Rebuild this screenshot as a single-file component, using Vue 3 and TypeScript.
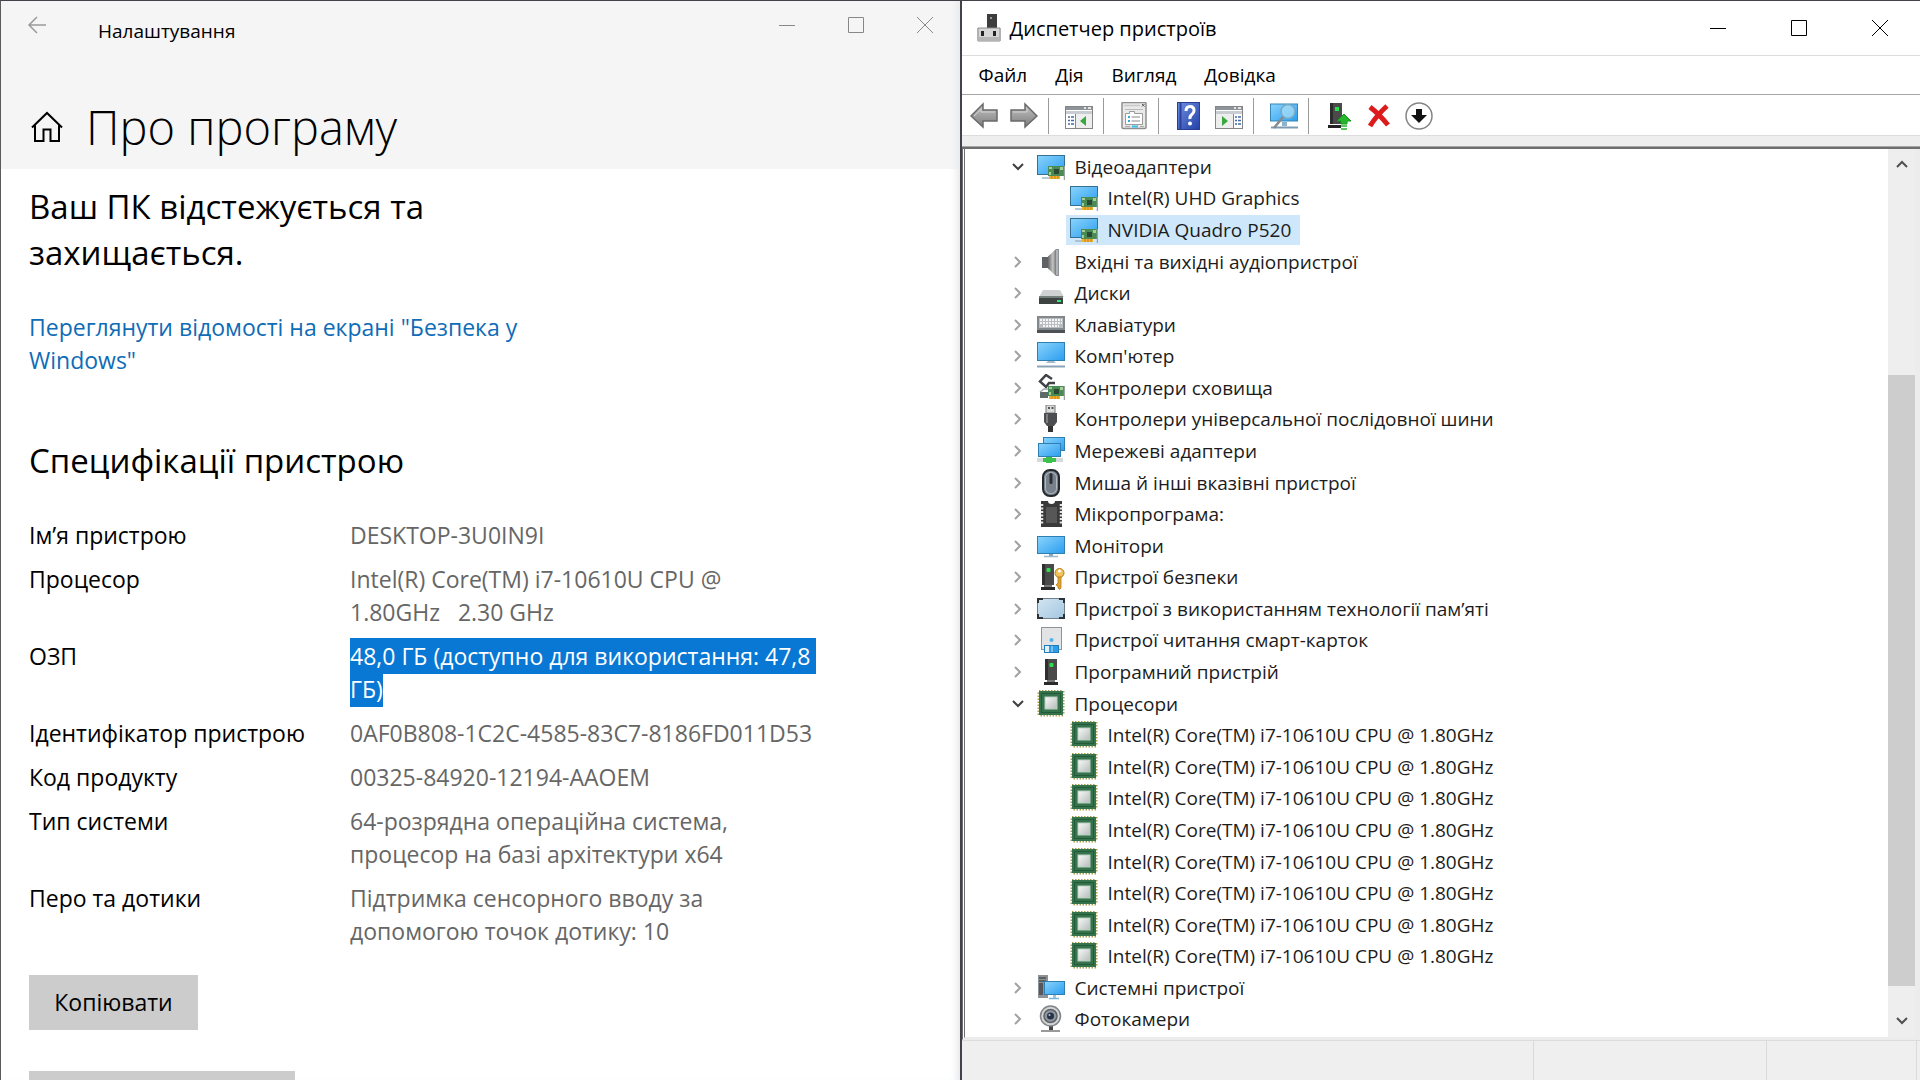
<script setup lang="ts">
interface Spec {
  label: string
  value: string
  selected?: boolean
}

interface Device {
  name: string
  icon: string
  open?: boolean
  child?: boolean
  selected?: boolean
}

interface Tool {
  icon: string
  label: string
  separated?: boolean
}

const specs: Spec[] = [
  { label: 'Ім’я пристрою', value: 'DESKTOP-3U0IN9I' },
  { label: 'Процесор', value: 'Intel(R) Core(TM) i7-10610U CPU @\n1.80GHz   2.30 GHz' },
  { label: 'ОЗП', value: '48,0 ГБ (доступно для використання: 47,8 \nГБ)', selected: true },
  { label: 'Ідентифікатор пристрою', value: '0AF0B808-1C2C-4585-83C7-8186FD011D53' },
  { label: 'Код продукту', value: '00325-84920-12194-AAOEM' },
  { label: 'Тип системи', value: '64-розрядна операційна система,\nпроцесор на базі архітектури x64' },
  { label: 'Перо та дотики', value: 'Підтримка сенсорного вводу за\nдопомогою точок дотику: 10' },
]

const menus: string[] = ['Файл', 'Дія', 'Вигляд', 'Довідка']

const tools: Tool[] = [
  { icon: 'back', label: 'Назад' },
  { icon: 'forward', label: 'Вперед' },
  { icon: 'tree-pane', label: 'Дерево консолі', separated: true },
  { icon: 'properties', label: 'Властивості', separated: true },
  { icon: 'help', label: 'Довідка', separated: true },
  { icon: 'action-pane', label: 'Область дій' },
  { icon: 'scan', label: 'Оновити конфігурацію', separated: true },
  { icon: 'update', label: 'Оновити драйвер', separated: true },
  { icon: 'remove', label: 'Видалити пристрій' },
  { icon: 'disable', label: 'Вимкнути пристрій' },
]

const cores: Device[] = Array.from({ length: 8 }, () => ({
  name: 'Intel(R) Core(TM) i7-10610U CPU @ 1.80GHz',
  icon: 'cpu',
  child: true,
}))

const devices: Device[] = [
  { name: 'Відеоадаптери', icon: 'display', open: true },
  { name: 'Intel(R) UHD Graphics', icon: 'display', child: true },
  { name: 'NVIDIA Quadro P520', icon: 'display', child: true, selected: true },
  { name: 'Вхідні та вихідні аудіопристрої', icon: 'audio' },
  { name: 'Диски', icon: 'disk' },
  { name: 'Клавіатури', icon: 'keyboard' },
  { name: "Комп'ютер", icon: 'computer' },
  { name: 'Контролери сховища', icon: 'storage' },
  { name: 'Контролери універсальної послідовної шини', icon: 'usb' },
  { name: 'Мережеві адаптери', icon: 'network' },
  { name: 'Миша й інші вказівні пристрої', icon: 'mouse' },
  { name: 'Мікропрограма:', icon: 'firmware' },
  { name: 'Монітори', icon: 'monitor' },
  { name: 'Пристрої безпеки', icon: 'security' },
  { name: 'Пристрої з використанням технології пам’яті', icon: 'memory' },
  { name: 'Пристрої читання смарт-карток', icon: 'smartcard' },
  { name: 'Програмний пристрій', icon: 'software' },
  { name: 'Процесори', icon: 'cpu', open: true },
  ...cores,
  { name: 'Системні пристрої', icon: 'system' },
  { name: 'Фотокамери', icon: 'camera' },
]
</script>

<template>
  <svg class="sprite" aria-hidden="true">
    <defs>
      <linearGradient id="g-screen" x1="0" y1="0" x2="1" y2="1">
        <stop offset="0" stop-color="#8ad4fb" />
        <stop offset="1" stop-color="#2b9df0" />
      </linearGradient>
      <linearGradient id="g-grey" x1="0" y1="0" x2="0" y2="1">
        <stop offset="0" stop-color="#c4c4c4" />
        <stop offset="1" stop-color="#7d7d7d" />
      </linearGradient>
      <linearGradient id="g-horn" x1="0" y1="0" x2="1" y2="0">
        <stop offset="0" stop-color="#666" />
        <stop offset="0.6" stop-color="#c4c4c4" />
        <stop offset="1" stop-color="#777" />
      </linearGradient>
      <linearGradient id="g-chip" x1="0" y1="0" x2="1" y2="1">
        <stop offset="0" stop-color="#fafafa" />
        <stop offset="1" stop-color="#b4bcb8" />
      </linearGradient>
      <linearGradient id="g-help" x1="0" y1="0" x2="1" y2="1">
        <stop offset="0" stop-color="#6f8fe0" />
        <stop offset="1" stop-color="#2340a8" />
      </linearGradient>
      <linearGradient id="g-pad" x1="0" y1="0" x2="1" y2="1">
        <stop offset="0" stop-color="#d3e5f2" />
        <stop offset="1" stop-color="#a3c6e0" />
      </linearGradient>

      <symbol id="device-manager" viewBox="0 0 24 28">
        <rect x="10" y="0" width="10" height="14" fill="#3d3d3d" />
        <rect x="13" y="3" width="2" height="2" fill="#999" />
        <path d="M0 14h24v13H0z" fill="#d6d6d6" />
        <path d="M1 14h22v13H1z" fill="none" stroke="#8c8c8c" />
        <path d="M1 23h22v4H1z" fill="#b5b5b5" />
        <rect x="4" y="17" width="3" height="5" fill="#222" />
        <rect x="16" y="17" width="3" height="5" fill="#222" />
      </symbol>

      <symbol id="back" viewBox="0 0 28 28">
        <path d="M1 14 13 2v6h14v11H13v6z" fill="url(#g-grey)" stroke="#6a6a6a" stroke-width="1.5" />
        <path d="M4 14l7-7v3h14" fill="none" stroke="#d2d2d2" />
      </symbol>
      <symbol id="forward" viewBox="0 0 28 28">
        <path d="M27 14 15 2v6H1v11h14v6z" fill="url(#g-grey)" stroke="#6a6a6a" stroke-width="1.5" />
        <path d="M3 10h14V6" fill="none" stroke="#d2d2d2" />
      </symbol>
      <symbol id="tree-pane" viewBox="0 0 28 28">
        <rect x="0.5" y="4.500" width="27" height="22" fill="#fff" stroke="#858585" />
        <rect x="1" y="5" width="26" height="3" fill="#8d949c" />
        <path d="M19 6h2M23 6h3" stroke="#e6e6e6" stroke-width="2" />
        <rect x="1" y="9" width="26" height="3" fill="#c9cdd2" />
        <path d="M10.500 12v14" stroke="#858585" />
        <rect x="11" y="12" width="16" height="14" fill="#eee" />
        <path d="M3 15h2M6 15h3M3 18.500h2M6 18.500h3M3 22h2M6 22h3" stroke="#3f69a8" stroke-width="1.500" />
        <path d="M21 14v10l-6-5z" fill="#39a83e" />
      </symbol>
      <symbol id="action-pane" viewBox="0 0 28 28">
        <rect x="0.5" y="4.500" width="27" height="22" fill="#fff" stroke="#858585" />
        <rect x="1" y="5" width="26" height="3" fill="#8d949c" />
        <path d="M19 6h2M23 6h3" stroke="#e6e6e6" stroke-width="2" />
        <rect x="1" y="9" width="26" height="3" fill="#c9cdd2" />
        <rect x="1" y="12" width="17" height="14" fill="#eee" />
        <path d="M18.500 12v14" stroke="#858585" />
        <path d="M20 15h2M23 15h3M20 18.500h2M23 18.500h3M20 22h2M23 22h3" stroke="#3f69a8" stroke-width="1.500" />
        <path d="M7 14v10l6-5z" fill="#39a83e" />
      </symbol>
      <symbol id="properties" viewBox="0 0 28 28">
        <rect x="2" y="0.500" width="24" height="26" rx="1" fill="#e9e9e9" stroke="#8f8f8f" stroke-width="1.500" />
        <path d="M4 3.500h16" stroke="#c8c8c8" stroke-width="1.500" />
        <path d="M22 2l2.500 2.500M24.500 2 22 4.500" stroke="#555" />
        <path d="M5.500 11.500h4v-2h5v2h8v11h-17z" fill="#fff" stroke="#9b9b9b" />
        <path d="M8 15h2M8 19h2" stroke="#2fa8dc" stroke-width="2" />
        <path d="M11.500 15H20M11.500 19H20" stroke="#888" />
        <path d="M5 7.500h18" stroke="#bbb" />
        <rect x="12" y="23.500" width="6" height="2" fill="#37c0e8" />
        <path d="M20 24.500h4M5 24.500h5" stroke="#aaa" />
      </symbol>
      <symbol id="help" viewBox="0 0 28 28">
        <rect x="2.500" y="0.500" width="22" height="27" fill="url(#g-help)" stroke="#2b3f8e" />
        <path d="M5.500 1v26" stroke="#2a429c" stroke-width="2" />
        <path d="M11 9q0-4.500 4-4.500t4 4q0 2.500-2.200 4T15 17" fill="none" stroke="#fff" stroke-width="3" />
        <circle cx="15" cy="21.500" r="2" fill="#fff" />
      </symbol>
      <symbol id="scan" viewBox="0 0 28 28">
        <rect x="0.5" y="2" width="27" height="17" fill="url(#g-screen)" stroke="#3786b4" />
        <path d="M1 25.500h27" stroke="#7d9bb0" stroke-width="2" />
        <path d="M12 20h5v4h-5z" fill="#8bb4cc" />
        <circle cx="18" cy="9.500" r="7" fill="#a6dcf6" fill-opacity="0.75" stroke="#72aac8" stroke-width="1.500" />
        <path d="M13 15 4 26" stroke="#858a8e" stroke-width="2.500" />
      </symbol>
      <symbol id="update" viewBox="0 0 28 28">
        <path d="M5 1h12v21H5z" fill="#4a4a4a" />
        <path d="M5 1h3v21H5z" fill="#2c2c2c" />
        <rect x="10" y="5" width="4" height="4" fill="#27e04a" />
        <path d="M3 23h13v3H3z" fill="#222" />
        <path d="m19 12 7 7h-4v3h-6v-3h-4z" fill="#27b52c" stroke="#179a1c" />
        <path d="M16 24h6M16 27h6" stroke="#27b52c" stroke-width="1.500" />
      </symbol>
      <symbol id="remove" viewBox="0 0 28 28">
        <path d="M5 5q9 7 18 18M22 4Q12 13 5 24" fill="none" stroke="#dc1c1c" stroke-width="5" />
      </symbol>
      <symbol id="disable" viewBox="0 0 28 28">
        <circle cx="14" cy="14" r="13" fill="#fff" stroke="#858585" stroke-width="1.500" />
        <path d="M11 7h6v6h5l-8 8-8-8h5z" fill="#111" />
      </symbol>

      <symbol id="card" viewBox="0 0 18 14">
        <path d="M0 0h16v10H0z" fill="#4a8a54" />
        <path d="M1 1h3v2H1zM12 1h3v3h-3zM1 6h2v3H1z" fill="#a5cf96" />
        <path d="M6 3h5v5H6z" fill="#2b4a33" />
        <path d="M1 10h11v3H1z" fill="#eeb02e" />
        <path d="M4 10v3M7 10v3M10 10v3" stroke="#c88612" />
        <path d="M16.500 0v14" stroke="#9aa3a0" stroke-width="1.500" />
      </symbol>

      <symbol id="display" viewBox="0 0 28 28">
        <rect x="0.5" y="2.500" width="27" height="19" fill="url(#g-screen)" stroke="#356f92" />
        <path d="M5 25h8" stroke="#9fb7c7" stroke-width="1.500" />
        <use href="#card" x="11" y="13" width="18" height="14" />
      </symbol>
      <symbol id="audio" viewBox="0 0 28 28">
        <path d="M5 9h6v11H5z" fill="#5e6266" />
        <path d="M11 8.500 19 1v27l-8-7.500z" fill="url(#g-horn)" />
        <path d="M19 1h3v27h-3z" fill="#8e9296" />
        <path d="M20 2v25" stroke="#d4d6d8" />
      </symbol>
      <symbol id="disk" viewBox="0 0 28 28">
        <path d="M6 11h17l4 7H2z" fill="#cfd2d2" />
        <path d="M2 17h24v8H2z" fill="#3c4341" />
        <path d="M2 17h24v2H2z" fill="#74807b" />
        <rect x="20" y="21" width="4" height="2" fill="#3be07b" />
      </symbol>
      <symbol id="keyboard" viewBox="0 0 28 28">
        <path d="M0 5h28v17H0z" fill="#83888d" />
        <path d="M2 7h24v10H2z" fill="#b9bdc1" />
        <path d="M3 9h22M3 12h22M6 15h16" stroke="#f4f4f4" stroke-width="1.800" stroke-dasharray="2 1" />
        <path d="M0 19h28v3H0z" fill="#4c5156" />
      </symbol>
      <symbol id="computer" viewBox="0 0 28 28">
        <rect x="0.5" y="0.500" width="27" height="18" fill="url(#g-screen)" stroke="#2f80b2" />
        <path d="M11 19h6l2 2H9z" fill="#a2bccd" />
        <path d="M0 24.500h28" stroke="#8ba4b8" stroke-width="2" />
      </symbol>
      <symbol id="storage" viewBox="0 0 28 28">
        <path d="M15 5 9 1 3 7.500 9 13l3-4h6" fill="none" stroke="#3f4347" stroke-width="2.500" />
        <path d="M3 18h8v6H3z" fill="#5c6a68" />
        <path d="M3 18l4-3h5" fill="none" stroke="#9da6a6" stroke-width="1.500" />
        <use href="#card" x="11" y="12" width="18" height="14" />
      </symbol>
      <symbol id="usb" viewBox="0 0 28 28">
        <rect x="9" y="0" width="9" height="8" fill="#dadada" stroke="#777" />
        <path d="M11 3h2M14.500 3h2" stroke="#555" stroke-width="2" />
        <path d="M7 8h13v9l-3 4h-7l-3-4z" fill="#4b4d50" />
        <path d="M10 9v9" stroke="#7c7f82" stroke-width="2" />
        <path d="M11 21h5v6h-5z" fill="#333" />
      </symbol>
      <symbol id="network" viewBox="0 0 28 28">
        <rect x="6.500" y="0.500" width="21" height="13" fill="url(#g-screen)" stroke="#2f80b2" />
        <rect x="1.500" y="6.500" width="22" height="13" fill="url(#g-screen)" stroke="#2f80b2" />
        <path d="M0 21h26v4H0z" fill="#d6dadb" />
        <path d="M6 21h13v4H6z" fill="#3cc24c" />
        <path d="M9 20h6v6H9z" fill="#3cc24c" />
      </symbol>
      <symbol id="mouse" viewBox="0 0 28 28">
        <rect x="6" y="1" width="16" height="26" rx="7" fill="#76818c" stroke="#26292c" stroke-width="2" />
        <rect x="8.500" y="3.500" width="11" height="21" rx="5" fill="none" stroke="#b2bac2" />
        <rect x="12.500" y="4" width="3" height="11" rx="1.500" fill="#2a3036" />
      </symbol>
      <symbol id="firmware" viewBox="0 0 28 28">
        <path d="M4 1h7q0 3 3.500 3T18 1h7v26H4z" fill="#3a3a3a" />
        <path d="M9 7h11v16H9z" fill="#575757" />
        <path d="M5 4v21M24 4v21" stroke="#e6e6e6" stroke-width="2.500" stroke-dasharray="2 1.500" />
      </symbol>
      <symbol id="monitor" viewBox="0 0 28 28">
        <rect x="0.5" y="4.500" width="27" height="17" fill="url(#g-screen)" stroke="#2f80b2" />
        <path d="M12 22h4v2h-4z" fill="#86a7bd" />
        <path d="M7 24.500h14" stroke="#9fb7c7" stroke-width="1.500" />
      </symbol>
      <symbol id="tower" viewBox="0 0 14 28">
        <path d="M1 1h12v21H1z" fill="#4a4a4a" />
        <path d="M1 1h3v21H1z" fill="#2f2f2f" />
        <rect x="5.500" y="5" width="4" height="4" rx="1" fill="#2fe04a" />
        <path d="M3 22h8v2H3z" fill="#777" />
        <path d="M0 24h14v3H0z" fill="#2a2a2a" />
      </symbol>
      <symbol id="security" viewBox="0 0 28 28">
        <use href="#tower" x="4" y="0" width="14" height="28" />
        <circle cx="22.500" cy="10" r="4.500" fill="#f1c35a" stroke="#b07b18" />
        <circle cx="22.500" cy="8" r="1.500" fill="#fff" />
        <path d="M21 14h3v11l-1.500 1.500L21 25v-2l-2-1 2-2z" fill="#e3a32f" stroke="#b07b18" stroke-width="0.800" />
      </symbol>
      <symbol id="memory" viewBox="0 0 28 28">
        <rect x="0.5" y="3.500" width="27" height="20" rx="2" fill="url(#g-pad)" stroke="#6f7f8c" />
        <path d="M1 8V4h5M22 4h5v4M27 19v4h-5M6 23H1v-4" fill="none" stroke="#2b3238" stroke-width="2" />
      </symbol>
      <symbol id="smartcard" viewBox="0 0 28 28">
        <rect x="4.500" y="1.500" width="20" height="22" fill="#e1e3e5" stroke="#8f9498" />
        <circle cx="14.500" cy="14" r="2" fill="#55b2e6" />
        <rect x="7.500" y="19.500" width="14" height="7" fill="#2d9de6" stroke="#1d7cbd" />
        <path d="M8 20h4v6H8z" fill="#e2f1fa" />
        <path d="M15 20v6" stroke="#bfe2f6" />
      </symbol>
      <symbol id="software" viewBox="0 0 28 28">
        <use href="#tower" x="7" y="0" width="14" height="28" />
      </symbol>
      <symbol id="cpu" viewBox="0 0 28 28">
        <rect x="2" y="1" width="24" height="24" fill="none" stroke="#a99f55" stroke-width="3" stroke-dasharray="1.500 1.500" />
        <rect x="2" y="1" width="24" height="24" fill="#34734c" />
        <rect x="4.500" y="3.500" width="19" height="19" fill="none" stroke="#245a39" />
        <rect x="8" y="7" width="12" height="12" fill="url(#g-chip)" stroke="#b8d0bf" />
      </symbol>
      <symbol id="system" viewBox="0 0 28 28">
        <path d="M1 1h10v23H1z" fill="#8d9296" />
        <path d="M2 4h7M2 7h7" stroke="#4c5054" stroke-width="1.500" />
        <path d="M2 9h4v12H2z" fill="#54585c" />
        <rect x="7.500" y="7.500" width="20" height="13" fill="url(#g-screen)" stroke="#2f80b2" />
        <path d="M12 24.500h10" stroke="#74b3da" stroke-width="1.500" />
        <path d="M16 21h3v3h-3z" fill="#9fc5dc" />
      </symbol>
      <symbol id="camera" viewBox="0 0 28 28">
        <path d="M12 20h4v5h-4z" fill="#444" />
        <path d="M4 26h19" stroke="#777" stroke-width="1.500" />
        <circle cx="13.500" cy="11" r="10" fill="#d2d4d6" stroke="#808488" stroke-width="1.500" />
        <circle cx="13.500" cy="11" r="6.500" fill="#8f969d" stroke="#5e6469" stroke-width="1.500" />
        <circle cx="13.500" cy="11" r="3.500" fill="#26324a" />
        <circle cx="12.500" cy="10" r="1" fill="#b6c8e4" />
      </symbol>
    </defs>
  </svg>

  <div class="desktop">
    <section class="window settings">
      <header class="settings-head">
        <div class="titlebar">
          <button class="back" type="button" aria-label="Назад">
            <svg width="20" height="20" viewBox="0 0 20 20">
              <path d="M19 10H2M10 2l-8 8 8 8" fill="none" stroke="#9a9a9a" stroke-width="1.500" />
            </svg>
          </button>
          <span class="app-name">Налаштування</span>
          <div class="controls">
            <button type="button" aria-label="Згорнути">
              <svg width="16" height="16" viewBox="0 0 16 16"><path d="M0 8.500h16" stroke="#888" /></svg>
            </button>
            <button type="button" aria-label="Розгорнути">
              <svg width="16" height="16" viewBox="0 0 16 16"><path d="M.5.500h15v15H.5z" fill="none" stroke="#888" /></svg>
            </button>
            <button type="button" aria-label="Закрити">
              <svg width="16" height="16" viewBox="0 0 16 16"><path d="m0 0 16 16M16 0 0 16" stroke="#888" /></svg>
            </button>
          </div>
        </div>
        <div class="page-title">
          <svg width="32" height="32" viewBox="0 0 32 32">
            <path d="M1 16.500 16 2l15 14.500M4 14.500V30h8.500V18.500h7V30H28V14.500" fill="none" stroke="#000" stroke-width="2" />
          </svg>
          <h1>Про програму</h1>
        </div>
      </header>

      <main class="about">
        <h2>Ваш ПК відстежується та<br />захищається.</h2>
        <p class="more"><a href="#security">Переглянути відомості на екрані "Безпека у<br />Windows"</a></p>
        <h2>Специфікації пристрою</h2>
        <dl>
          <div v-for="spec in specs" :key="spec.label" class="spec">
            <dt>{{ spec.label }}</dt>
            <dd><span :class="{ marked: spec.selected }">{{ spec.value }}</span></dd>
          </div>
        </dl>
        <button class="action" type="button">Копіювати</button>
        <button class="action wide" type="button" aria-label="Перейменувати цей ПК"></button>
      </main>
    </section>

    <section class="window manager">
      <header class="manager-title">
        <svg width="24" height="28"><use href="#device-manager" /></svg>
        <span>Диспетчер пристроїв</span>
        <div class="controls">
          <button type="button" aria-label="Згорнути">
            <svg width="16" height="16" viewBox="0 0 16 16"><path d="M0 8.500h16" stroke="#000" /></svg>
          </button>
          <button type="button" aria-label="Розгорнути">
            <svg width="16" height="16" viewBox="0 0 16 16"><path d="M.5.500h15v15H.5z" fill="none" stroke="#000" /></svg>
          </button>
          <button type="button" aria-label="Закрити">
            <svg width="16" height="16" viewBox="0 0 16 16"><path d="m0 0 16 16M16 0 0 16" stroke="#000" /></svg>
          </button>
        </div>
      </header>

      <nav class="menubar">
        <button v-for="menu in menus" :key="menu" type="button">{{ menu }}</button>
      </nav>

      <div class="toolbar">
        <template v-for="tool in tools" :key="tool.icon">
          <span v-if="tool.separated" class="separator"></span>
          <button type="button" :aria-label="tool.label">
            <svg width="28" height="28"><use :href="'#' + tool.icon" /></svg>
          </button>
        </template>
      </div>

      <div class="pane">
        <ul class="tree">
          <li v-for="(device, i) in devices" :key="i" :class="{ child: device.child }">
            <button v-if="!device.child" class="twist" type="button" :aria-label="device.name">
              <svg width="12" height="12" viewBox="0 0 12 12">
                <path v-if="device.open" d="m1 3 5 5 5-5" fill="none" stroke="#404040" stroke-width="2" />
                <path v-else d="m3 1 5 5-5 5" fill="none" stroke="#a2a2a2" stroke-width="2" />
              </svg>
            </button>
            <span class="entry" :class="{ selected: device.selected }">
              <svg width="28" height="28"><use :href="'#' + device.icon" /></svg>
              <span>{{ device.name }}</span>
            </span>
          </li>
        </ul>
        <div class="scrollbar">
          <button type="button" aria-label="Вгору">
            <svg width="12" height="12" viewBox="0 0 12 12"><path d="m1 8 5-5 5 5" fill="none" stroke="#505050" stroke-width="2" /></svg>
          </button>
          <div class="before"></div>
          <div class="thumb"></div>
          <div class="after"></div>
          <button type="button" aria-label="Вниз">
            <svg width="12" height="12" viewBox="0 0 12 12"><path d="m1 3 5 5 5-5" fill="none" stroke="#505050" stroke-width="2" /></svg>
          </button>
        </div>
      </div>

      <footer class="status">
        <span class="message"></span>
        <span class="middle"></span>
        <span class="last"></span>
      </footer>
    </section>
  </div>
</template>

<style>
body {
  margin: 0;
}
</style>

<style scoped>
.sprite {
  position: absolute;
  width: 0;
  height: 0;
}

.desktop {
  display: flex;
  height: 100vh;
  overflow: hidden;
  background: #fff;
  color: #000;
  font-family: "Open Sans", "Noto Sans", sans-serif;
  font-size: 20px;
}

.window {
  box-sizing: border-box;
  display: flex;
  flex: 1 1 0;
  flex-direction: column;
  min-width: 0;
  border-top: 1px solid #454148;
  border-left: 1px solid #5c5a5c;
  overflow: hidden;
}

button {
  padding: 0;
  border: 0;
  background: none;
  color: inherit;
  font: inherit;
}

svg {
  display: block;
  flex: none;
}

h1,
h2,
p,
dl,
dd,
ul {
  margin: 0;
  padding: 0;
  font-weight: 400;
}

.controls {
  display: flex;
  margin-left: auto;
}

.controls button {
  display: flex;
  align-items: center;
  justify-content: center;
}

/* Settings window */
.settings {
  border-right: 1px solid #454148;
  box-shadow: inset -8px 0 8px -6px #dfe2e6;
}

.settings-head {
  flex: none;
  height: 168px;
  background: linear-gradient(to left, #e9ebee, #f5f5f5 8px);
}

.titlebar {
  display: flex;
  height: 60px;
}

.back {
  display: flex;
  align-items: center;
  width: 97px;
  height: 48px;
  padding-left: 26px;
}

.app-name {
  font-size: 19px;
  line-height: 60px;
}

.settings .controls button {
  width: 69px;
  height: 48px;
}

.page-title {
  display: flex;
  align-items: center;
  gap: 23px;
  padding: 32px 0 0 30px;
}

h1 {
  font-size: 47px;
  font-weight: 300;
  line-height: 68px;
}

.about {
  display: flex;
  flex-direction: column;
  align-items: flex-start;
  padding: 15px 28px 0;
  font-size: 23px;
  line-height: 33px;
}

h2 {
  font-size: 33px;
  line-height: 46px;
}

.more {
  margin: 35px 0 61px;
}

a {
  color: #0f6cb6;
  text-decoration: none;
}

dl {
  display: flex;
  flex-direction: column;
  gap: 11px;
  margin: 35px 0 27px;
}

.spec {
  display: flex;
}

dt {
  width: 321px;
}

dd {
  color: #666;
  white-space: pre;
}

.marked {
  padding: 2px 0;
  background: #0878d4;
  color: #fff;
}

.action {
  flex: none;
  width: 169px;
  height: 55px;
  background: #ccc;
}

.wide {
  width: 266px;
  margin-top: 41px;
}

/* Device manager window */
.manager {
  border-left: 1px solid #454148;
}

.manager-title {
  display: flex;
  align-items: center;
  gap: 9px;
  height: 54px;
  padding-left: 15px;
  border-bottom: 1px solid #ddd;
}

.manager-title .controls button {
  width: 81px;
  height: 54px;
}

.menubar {
  display: flex;
  gap: 28px;
  height: 38px;
  padding-left: 17px;
  border-bottom: 1px solid #a6a6a6;
  font-size: 19px;
}

.toolbar {
  display: flex;
  align-items: center;
  height: 38px;
  padding: 2px 0 0 2px;
}

.toolbar button {
  display: flex;
  justify-content: center;
  width: 40px;
}

.separator {
  width: 10px;
  height: 36px;
  margin-left: 4px;
  border-left: 1px solid #9a9a9a;
}

.pane {
  display: flex;
  flex: 1;
  min-height: 0;
  border: 3px solid #ececec;
  border-top: 0;
  border-right-width: 5px;
  border-left: 3px double #6e6e6e;
  box-shadow: 0 -2px #6e6e6e, 0 -3px #a6a6a6, 0 -13px #eee, 0 -14px #ddd;
  margin-top: 14px;
}

.tree {
  display: flex;
  flex: 1;
  flex-direction: column;
  padding: 2px 0;
  color: #1c1c1c;
  font-size: 19px;
  line-height: 30px;
  list-style: none;
}

li {
  display: flex;
  flex: 1;
  align-items: center;
  min-height: 0;
  padding-left: 41px;
}

.child {
  padding-left: 101px;
}

.twist {
  display: flex;
  justify-content: center;
  width: 24px;
  margin-right: 3px;
}

.entry {
  display: flex;
  align-items: center;
  gap: 10px;
  padding: 0 9px 0 4px;
}

.selected {
  background: #cfe7fb;
}

.scrollbar {
  display: flex;
  flex-direction: column;
  width: 27px;
  background: #eee;
}

.scrollbar button {
  display: flex;
  align-items: center;
  justify-content: center;
  height: 32px;
}

.before {
  flex: 194;
}

.thumb {
  flex: 612;
  background: #cdcdcd;
}

.after {
  flex: 19;
}

.status {
  display: flex;
  height: 39px;
  border-top: 1px solid #dcdcdc;
  background: #efefef;
}

.status span {
  border-right: 1px solid #dadada;
}

.message {
  flex: 573;
}

.middle {
  flex: 233;
}

.last {
  flex: 149;
  margin-right: 3px;
}
</style>
